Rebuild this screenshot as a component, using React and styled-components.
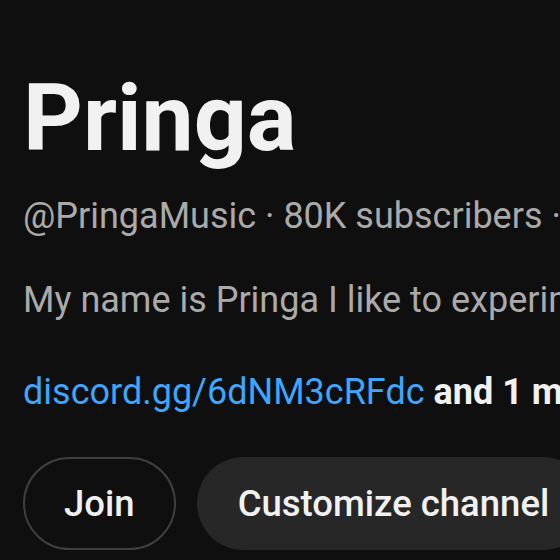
import styled, { createGlobalStyle } from "styled-components";

const Global = createGlobalStyle`
  html, body {
    margin: 0;
    padding: 0;
    background: #0f0f0f;
    overflow: hidden;
  }
  body {
    font-family: Roboto, "Liberation Sans", Arial, sans-serif;
    color: #f1f1f1;
  }
`;

const Header = styled.section`
  width: 560px;
  height: 560px;
  box-sizing: border-box;
  padding: 72px 0 0 23px;
  display: flex;
  flex-direction: column;
  overflow: hidden;
  white-space: nowrap;
`;

const Title = styled.h1`
  margin: 0;
  font-size: 93px;
  line-height: 93px;
  font-weight: 700;
  color: #f1f1f1;
`;

const Meta = styled.div`
  margin-top: ${(p) => p.$top}px;
  font-size: 36px;
  line-height: 44px;
  color: #aaaaaa;
`;

const Links = styled.div`
  margin-top: 44px;
  font-size: 36px;
  line-height: 52px;
`;

const Link = styled.a`
  color: #3ea6ff;
  text-decoration: none;
`;

const More = styled.span`
  color: #f1f1f1;
  font-weight: 700;
`;

const Actions = styled.div`
  margin-top: 39px;
  display: flex;
  gap: 21px;
`;

const Button = styled.button`
  flex-shrink: 0;
  height: 93px;
  padding: 0 39px;
  border-radius: 47px;
  border: 2px solid ${(p) => (p.$outline ? "#3f3f3f" : "transparent")};
  background: ${(p) => (p.$outline ? "transparent" : "#272727")};
  color: #f1f1f1;
  font-family: inherit;
  font-size: 36.5px;
  font-weight: 500;
  white-space: nowrap;
`;

const App = () => {
  return (
    <>
      <Global />
      <Header>
        <Title>Pringa</Title>
        <Meta $top={29}>@PringaMusic · 80K subscribers · 214 videos</Meta>
        <Meta $top={40}>My name is Pringa I like to experiment with music</Meta>
        <Links>
          <Link href="#">discord.gg/6dNM3cRFdc</Link> <More>and 1 more link</More>
        </Links>
        <Actions>
          <Button $outline>Join</Button>
          <Button>Customize channel</Button>
        </Actions>
      </Header>
    </>
  );
};

export default App;
